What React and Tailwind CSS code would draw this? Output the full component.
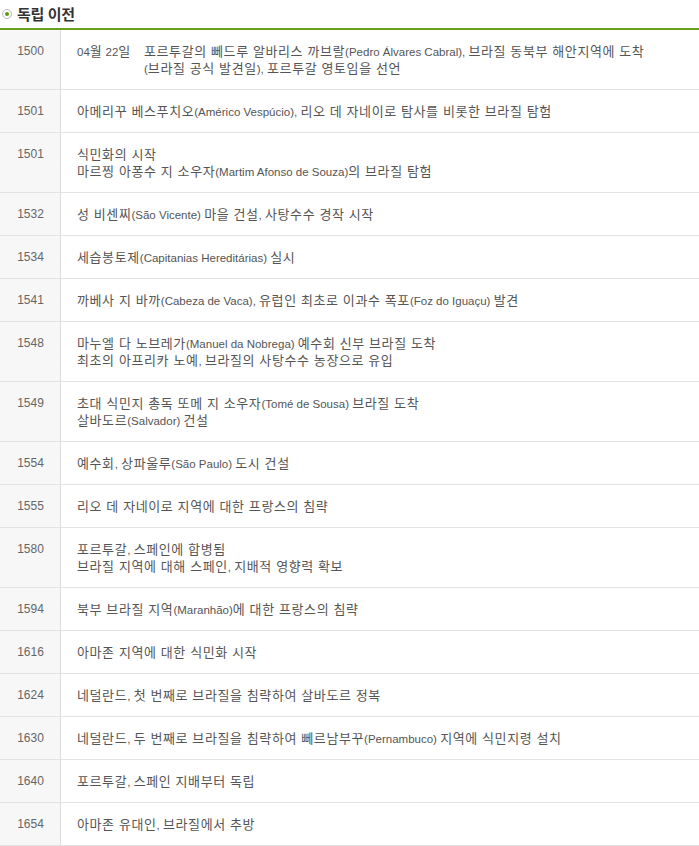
import React from 'react';

const rows = [
  { year: '1500', date: '04월 22일', lines: ['포르투갈의 뻬드루 알바리스 까브랄(Pedro Álvares Cabral), 브라질 동북부 해안지역에 도착', '(브라질 공식 발견일), 포르투갈 영토임을 선언'] },
  { year: '1501', lines: ['아메리꾸 베스푸치오(Américo Vespúcio), 리오 데 자네이로 탐사를 비롯한 브라질 탐험'] },
  { year: '1501', lines: ['식민화의 시작', '마르찡 아퐁수 지 소우자(Martim Afonso de Souza)의 브라질 탐험'] },
  { year: '1532', lines: ['성 비센찌(São Vicente) 마을 건설, 사탕수수 경작 시작'] },
  { year: '1534', lines: ['세습봉토제(Capitanias Hereditárias) 실시'] },
  { year: '1541', lines: ['까베사 지 바까(Cabeza de Vaca), 유럽인 최초로 이과수 폭포(Foz do Iguaçu) 발견'] },
  { year: '1548', lines: ['마누엘 다 노브레가(Manuel da Nobrega) 예수회 신부 브라질 도착', '최초의 아프리카 노예, 브라질의 사탕수수 농장으로 유입'] },
  { year: '1549', lines: ['초대 식민지 총독 또메 지 소우자(Tomé de Sousa) 브라질 도착', '살바도르(Salvador) 건설'] },
  { year: '1554', lines: ['예수회, 상파울루(São Paulo) 도시 건설'] },
  { year: '1555', lines: ['리오 데 자네이로 지역에 대한 프랑스의 침략'] },
  { year: '1580', lines: ['포르투갈, 스페인에 합병됨', '브라질 지역에 대해 스페인, 지배적 영향력 확보'] },
  { year: '1594', lines: ['북부 브라질 지역(Maranhão)에 대한 프랑스의 침략'] },
  { year: '1616', lines: ['아마존 지역에 대한 식민화 시작'] },
  { year: '1624', lines: ['네덜란드, 첫 번째로 브라질을 침략하여 살바도르 정복'] },
  { year: '1630', lines: ['네덜란드, 두 번째로 브라질을 침략하여 뻬르남부꾸(Pernambuco) 지역에 식민지령 설치'] },
  { year: '1640', lines: ['포르투갈, 스페인 지배부터 독립'] },
  { year: '1654', lines: ['아마존 유대인, 브라질에서 추방'] },
];

// hangul wide, latin runs narrow (like the original page font)
function Mixed({ text }) {
  const parts = text.split(/([\u3131-\uD7A3]+)/).filter(Boolean);
  return parts.map((p, i) =>
    /[\u3131-\uD7A3]/.test(p) || /^\s+$/.test(p) ? (
      <span key={i} className="tracking-[0.6px]">{p}</span>
    ) : (
      <span key={i} className="text-[11.5px] leading-none">{p}</span>
    )
  );
}

export default function App() {
  return (
    <div className="w-[699px] bg-white font-['Liberation_Sans','Noto_Sans_CJK_KR',sans-serif] text-[#555]">
      <div className="flex items-center h-[28px] pl-[2px] gap-[5px]">
        <span className="w-[10px] h-[10px] rounded-full border border-[#bbb] flex items-center justify-center">
          <span className="w-[4px] h-[4px] rounded-full bg-[#5d9a0f]" />
        </span>
        <h2 className="text-[15px] font-bold text-[#333] leading-none tracking-[-0.3px]">독립 이전</h2>
      </div>
      <div className="border-t-2 border-[#6a9e1f]">
        {rows.map((r, i) => (
          <div key={i} className="flex border-b border-[#e3e3e3] leading-[17px]">
            <div className="w-[61px] shrink-0 bg-[#f7f7f8] border-r border-[#dcdcdc] text-center pt-[13px] pb-[12px] pl-[1px] text-[12px] text-[#666]">{r.year}</div>
            <div className="flex pl-[16px] pt-[13px] pb-[12px] text-[13px] text-[#555]">
              {r.date && <div className="w-[67px] shrink-0"><Mixed text={r.date} /></div>}
              <div>
                {r.lines.map((l, j) => (
                  <div key={j}><Mixed text={l} /></div>
                ))}
              </div>
            </div>
          </div>
        ))}
      </div>
    </div>
  );
}
